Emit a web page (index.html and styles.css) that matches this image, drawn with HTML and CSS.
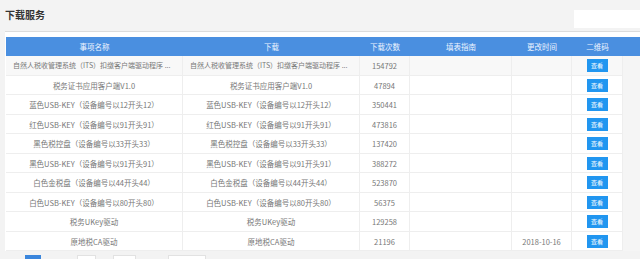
FILE: index.html
```html
<!DOCTYPE html>
<html lang="zh">
<head>
<meta charset="utf-8">
<title>下载服务</title>
<link rel="stylesheet" href="styles.css">
</head>
<body>
<div class="topbar">
  <h1 class="title">下载服务</h1>
  <div class="search"></div>
</div>
<div class="panel">
  <div class="grid-head">
    <div class="hc c1">事项名称</div>
    <div class="hc c2">下载</div>
    <div class="hc c3">下载次数</div>
    <div class="hc c4">填表指南</div>
    <div class="hc c5">更改时间</div>
    <div class="hc c6">二维码</div>
  </div>
  <div class="grid-body">
    <div class="row first">
      <div class="cell c1 ell">自然人税收管理系统（ITS）扣缴客户端驱动程序 ...</div>
      <div class="cell c2 ell">自然人税收管理系统（ITS）扣缴客户端驱动程序 ...</div>
      <div class="cell c3">154792</div><div class="cell c4"></div><div class="cell c5"></div>
      <div class="cell c6"><span class="btn">查看</span></div>
    </div>
    <div class="row">
      <div class="cell c1">税务证书应用客户端V1.0</div><div class="cell c2">税务证书应用客户端V1.0</div>
      <div class="cell c3">47894</div><div class="cell c4"></div><div class="cell c5"></div>
      <div class="cell c6"><span class="btn">查看</span></div>
    </div>
    <div class="row">
      <div class="cell c1">蓝色USB-KEY（设备编号以12开头12）</div><div class="cell c2">蓝色USB-KEY（设备编号以12开头12）</div>
      <div class="cell c3">350441</div><div class="cell c4"></div><div class="cell c5"></div>
      <div class="cell c6"><span class="btn">查看</span></div>
    </div>
    <div class="row">
      <div class="cell c1">红色USB-KEY（设备编号以91开头91）</div><div class="cell c2">红色USB-KEY（设备编号以91开头91）</div>
      <div class="cell c3">473816</div><div class="cell c4"></div><div class="cell c5"></div>
      <div class="cell c6"><span class="btn">查看</span></div>
    </div>
    <div class="row">
      <div class="cell c1">黑色税控盘（设备编号以33开头33）</div><div class="cell c2">黑色税控盘（设备编号以33开头33）</div>
      <div class="cell c3">137420</div><div class="cell c4"></div><div class="cell c5"></div>
      <div class="cell c6"><span class="btn">查看</span></div>
    </div>
    <div class="row">
      <div class="cell c1">黑色USB-KEY（设备编号以91开头91）</div><div class="cell c2">黑色USB-KEY（设备编号以91开头91）</div>
      <div class="cell c3">388272</div><div class="cell c4"></div><div class="cell c5"></div>
      <div class="cell c6"><span class="btn">查看</span></div>
    </div>
    <div class="row">
      <div class="cell c1">白色金税盘（设备编号以44开头44）</div><div class="cell c2">白色金税盘（设备编号以44开头44）</div>
      <div class="cell c3">523870</div><div class="cell c4"></div><div class="cell c5"></div>
      <div class="cell c6"><span class="btn">查看</span></div>
    </div>
    <div class="row">
      <div class="cell c1">白色USB-KEY（设备编号以80开头80）</div><div class="cell c2">白色USB-KEY（设备编号以80开头80）</div>
      <div class="cell c3">56375</div><div class="cell c4"></div><div class="cell c5"></div>
      <div class="cell c6"><span class="btn">查看</span></div>
    </div>
    <div class="row">
      <div class="cell c1">税务UKey驱动</div><div class="cell c2">税务UKey驱动</div>
      <div class="cell c3">129258</div><div class="cell c4"></div><div class="cell c5"></div>
      <div class="cell c6"><span class="btn">查看</span></div>
    </div>
    <div class="row">
      <div class="cell c1">原地税CA驱动</div><div class="cell c2">原地税CA驱动</div>
      <div class="cell c3">21196</div><div class="cell c4"></div><div class="cell c5">2018-10-16</div>
      <div class="cell c6"><span class="btn">查看</span></div>
    </div>
  </div>
  <div class="pager">
    <span class="pg active"></span>
    <span class="pg p1"></span>
    <span class="pg p2"></span>
    <span class="pg p3"></span>
  </div>
</div>
</body>
</html>
```
FILE: styles.css
```css
html, body {
  margin: 0;
  padding: 0;
  background: #f3f3f3;
  font-family: "Noto Sans CJK SC", "Liberation Sans", sans-serif;
  overflow: hidden;
}
.topbar {
  height: 31px;
  display: flex;
  justify-content: space-between;
  align-items: flex-start;
  padding-left: 5px;
  box-sizing: border-box;
}
.title {
  margin: 8px 0 0 0;
  font-size: 10px;
  line-height: 14px;
  font-weight: bold;
  color: #333;
}
.search {
  margin-top: 10px;
  width: 66px;
  height: 18px;
  background: #fff;
}
.panel {
  margin-left: 5px;
  border-top: 1px solid #dcdcdc;
  background: #fff;
  padding: 5px 0 0 1px;
}
.grid-head {
  display: flex;
  height: 19px;
  background: #4a8fe0;
  color: #eef4ff;
  font-size: 7.5px;
  line-height: 19px;
}
.hc, .cell {
  text-align: center;
  flex: none;
  box-sizing: border-box;
}
.c1 { width: 177px; }
.c2 { width: 177px; }
.c3 { width: 50px; }
.c4 { width: 102px; }
.c5 { width: 60px; }
.c6 { width: 51px; }
.grid-body {
  background: #f5f5f5;
}
.row {
  display: flex;
  height: 19.5px;
  font-size: 7.5px;
  color: #777;
}
.row .cell {
  height: 19.5px;
  line-height: 19px;
  background: #fff;
  border-right: 1px solid #eeeeee;
  border-bottom: 1px solid #eeeeee;
  padding: 0 4px;
  white-space: nowrap;
}
.row.first .cell { background: #f8f8f8; }
.row .cell.ell {
  text-align: left;
  padding-left: 7px;
  font-size: 7px;
}
.btn {
  display: inline-block;
  width: 21px;
  height: 13px;
  line-height: 13px;
  background: #2196f0;
  color: #fff;
  font-size: 6px;
  vertical-align: middle;
  margin-top: -2px;
}
.pager {
  background: #f3f3f3;
  margin-left: -1px;
  height: 20px;
  display: flex;
  align-items: flex-start;
  padding-top: 4px;
  padding-left: 20px;
  box-sizing: border-box;
}
.pg {
  display: block;
  height: 14px;
  background: #fff;
  border: 1px solid #e2e2e2;
  box-sizing: border-box;
}
.pg.active { width: 16px; background: #3b86dc; border-color: #3b86dc; }
.pg.p1 { width: 19px; margin-left: 36px; }
.pg.p2 { width: 23px; margin-left: 17px; }
.pg.p3 { width: 38px; margin-left: 32px; }
```
